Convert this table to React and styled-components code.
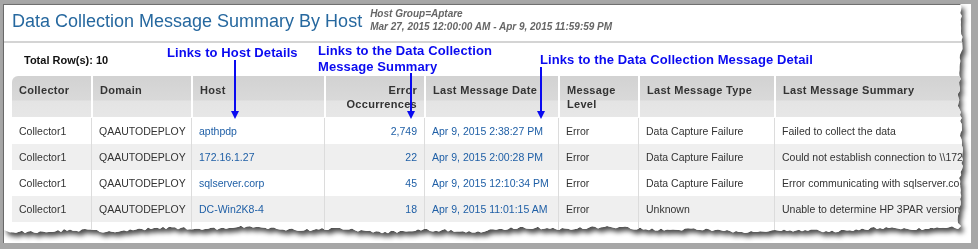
import React from "react";
import styled, { createGlobalStyle } from "styled-components";

const GlobalStyle = createGlobalStyle`
  html, body {
    margin: 0;
    padding: 0;
    background: #fff;
  }
  body {
    font-family: "Liberation Sans", Arial, sans-serif;
  }
`;

// jagged "torn paper" outline for the right and bottom edges
const makeRand = (seed) => {
  let s = seed;
  return () => {
    s = (s * 16807) % 2147483647;
    return s / 2147483647;
  };
};

const tornEdge = (() => {
  const r = makeRand(11);
  const pts = ["0 0"];
  for (let y = 0; y <= 219; y += 3) {
    const x =
      956.5 + 1.4 * Math.sin(y / 19) + 0.8 * Math.sin(y / 6.1 + 1.3) + (r() - 0.5) * 2.2;
    pts.push(`${x.toFixed(1)}px ${y}px`);
  }
  pts.push("957px 222px", "954px 225px");
  for (let x = 951; x >= 0; x -= 3) {
    const y =
      225.5 + 1.8 * Math.sin(x / 57 + 0.7) + 1 * Math.sin(x / 14.3) + (r() - 0.5) * 2.8;
    pts.push(`${x}px ${y.toFixed(1)}px`);
  }
  pts.push("0 227px");
  return pts.join(", ");
})();

const Frame = styled.div`
  width: 978px;
  height: 249px;
  box-sizing: border-box;
  border-style: solid;
  border-color: #a7a7a7;
  border-width: 4px 7px 6px 3px;
  padding-left: 1px;
  background: #fff;
  box-shadow: inset 1px 0 0 #707070;
`;

const ShadowWrap = styled.div`
  height: 100%;
  filter: drop-shadow(3px 4px 2.5px rgba(0, 0, 0, 0.7));
`;

const Paper = styled.div`
  position: relative;
  height: 100%;
  box-sizing: border-box;
  background: #fff;
  border-top: 1px solid #707070;
  overflow: hidden;
  clip-path: polygon(${tornEdge});
`;

const HeaderBar = styled.div`
  display: flex;
  align-items: flex-start;
  height: 36px;
  padding: 0 8px;
  border-bottom: 2px solid #d4d4d4;
`;

const Title = styled.h1`
  margin: 6px 0 0;
  font-size: 18px;
  line-height: 20px;
  font-weight: normal;
  color: #26689f;
  white-space: nowrap;
`;

const Subtitle = styled.div`
  margin: 2px 0 0 8px;
  font-size: 10px;
  line-height: 13px;
  font-weight: bold;
  font-style: italic;
  color: #666;
  white-space: nowrap;
`;

const TotalBar = styled.div`
  display: flex;
  align-items: center;
  height: 33px;
  padding-left: 20px;
  font-size: 11px;
  font-weight: bold;
  color: #111;
`;

const Table = styled.table`
  margin-left: 8px;
  border-collapse: separate;
  border-spacing: 0;
  table-layout: fixed;
  width: 1022px;
  font-size: 10.5px;
  color: #333;
`;

const Th = styled.th`
  box-sizing: border-box;
  height: 42px;
  padding: 7px 7px 0;
  vertical-align: top;
  text-align: ${(p) => (p.$right ? "right" : "left")};
  font-size: 11px;
  font-weight: bold;
  letter-spacing: 0.3px;
  line-height: 14px;
  color: #333;
  white-space: nowrap;
  background: linear-gradient(#d2d2d2 0, #d9d9d9 24px, #e4e4e4 25px, #e7e7e7 100%);
  border-bottom: 1px solid #fff;

  & + & {
    border-left: 2px solid #fff;
  }

  &:first-child {
    border-top-left-radius: 6px;
  }
`;

const Tr = styled.tr`
  background: ${(p) => (p.$odd ? "#efefef" : "#fff")};
`;

const Td = styled.td`
  box-sizing: border-box;
  height: 26px;
  padding: 0 7px;
  text-align: ${(p) => (p.$right ? "right" : "left")};
  white-space: nowrap;
  overflow: hidden;

  & + & {
    border-left: 1px solid #dcdcdc;
  }
`;

const Link = styled.a`
  color: #1f5fa6;
  text-decoration: none;
`;

const Note = styled.div`
  position: absolute;
  left: ${(p) => p.$left}px;
  top: ${(p) => p.$top}px;
  font-size: 13px;
  line-height: 16px;
  font-weight: bold;
  letter-spacing: 0.1px;
  color: #0a0af0;
  white-space: nowrap;
`;

const ArrowSvg = styled.svg`
  position: absolute;
  left: ${(p) => p.$left}px;
  top: ${(p) => p.$top}px;
  overflow: visible;
`;

const Arrow = ({ left, top, length }) => (
  <ArrowSvg $left={left} $top={top} width="8" height={length}>
    <line x1="4" y1="0" x2="4" y2={length - 6} stroke="#0a0af0" strokeWidth="2" />
    <polygon points={`0,${length - 8} 8,${length - 8} 4,${length}`} fill="#0a0af0" />
  </ArrowSvg>
);

const columns = [
  { label: ["Collector"], width: 79 },
  { label: ["Domain"], width: 100 },
  { label: ["Host"], width: 133, link: true },
  { label: ["Error", "Occurrences"], width: 100, right: true, link: true },
  { label: ["Last Message Date"], width: 134, link: true },
  { label: ["Message", "Level"], width: 80 },
  { label: ["Last Message Type"], width: 136 },
  { label: ["Last Message Summary"], width: 260 },
];

const rows = [
  ["Collector1", "QAAUTODEPLOY", "apthpdp", "2,749", "Apr 9, 2015 2:38:27 PM", "Error", "Data Capture Failure", "Failed to collect the data"],
  ["Collector1", "QAAUTODEPLOY", "172.16.1.27", "22", "Apr 9, 2015 2:00:28 PM", "Error", "Data Capture Failure", "Could not establish connection to \\\\172.16.1.27"],
  ["Collector1", "QAAUTODEPLOY", "sqlserver.corp", "45", "Apr 9, 2015 12:10:34 PM", "Error", "Data Capture Failure", "Error communicating with sqlserver.corp"],
  ["Collector1", "QAAUTODEPLOY", "DC-Win2K8-4", "18", "Apr 9, 2015 11:01:15 AM", "Error", "Unknown", "Unable to determine HP 3PAR version"],
  ["", "", "", "", "", "", "", ""],
];

const App = () => {
  return (
    <>
      <GlobalStyle />
      <Frame>
        <ShadowWrap>
          <Paper>
            <HeaderBar>
              <Title>Data Collection Message Summary By Host</Title>
              <Subtitle>
                Host Group=Aptare
                <br />
                Mar 27, 2015 12:00:00 AM - Apr 9, 2015 11:59:59 PM
              </Subtitle>
            </HeaderBar>
            <TotalBar>Total Row(s): 10</TotalBar>
            <Table>
              <colgroup>
                {columns.map((c, i) => (
                  <col key={i} width={c.width} />
                ))}
              </colgroup>
              <thead>
                <tr>
                  {columns.map((c, i) => (
                    <Th key={i} $right={c.right}>
                      {c.label.map((l, j) => (
                        <React.Fragment key={j}>
                          {j > 0 && <br />}
                          {l}
                        </React.Fragment>
                      ))}
                    </Th>
                  ))}
                </tr>
              </thead>
              <tbody>
                {rows.map((row, r) => (
                  <Tr key={r} $odd={r % 2 === 1}>
                    {row.map((cell, i) => (
                      <Td key={i} $right={columns[i].right}>
                        {columns[i].link && cell ? <Link href="#">{cell}</Link> : cell}
                      </Td>
                    ))}
                  </Tr>
                ))}
              </tbody>
            </Table>

            <Note $left={163} $top={40}>Links to Host Details</Note>
            <Note $left={314} $top={38}>
              Links to the Data Collection
              <br />
              Message Summary
            </Note>
            <Note $left={536} $top={47}>Links to the Data Collection Message Detail</Note>
            <Arrow left={227} top={55} length={59} />
            <Arrow left={403} top={68} length={46} />
            <Arrow left={533} top={62} length={52} />
          </Paper>
        </ShadowWrap>
      </Frame>
    </>
  );
};

export default App;
